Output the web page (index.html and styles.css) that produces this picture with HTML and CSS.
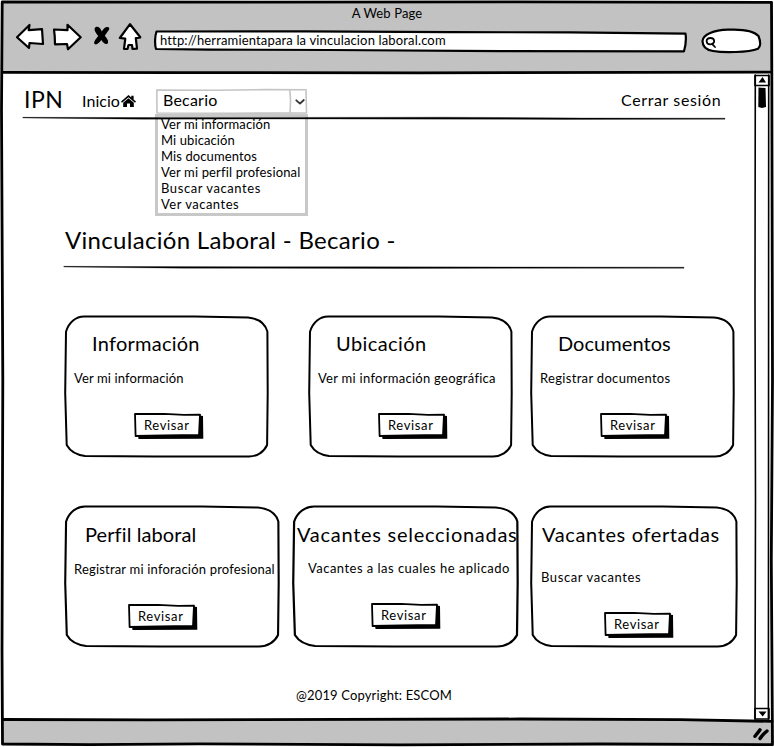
FILE: index.html
```
<!DOCTYPE html>
<html lang="es">
<head>
<meta charset="utf-8">
<title>A Web Page</title>
<link rel="stylesheet" href="styles.css">
</head>
<body>
<svg class="defs" width="0" height="0" aria-hidden="true">
  <symbol id="card-outline" viewBox="0 0 203 141" preserveAspectRatio="none">
    <path d="M1 15.7C4 6 11 .7 19 .6L90 .4L130 .5L183 1.5C193 2.5 200 7 202.4 15.5L202.7 77L202.1 129C199 136 192 140.4 184 140.5L90 140.6L20 139.9C12 139 5 135 1.7 129L.2 77Z"/>
  </symbol>
  <symbol id="button-outline" viewBox="0 0 70 27">
    <path class="solid" d="M4 22L65 21L65.5 2.5L69 3L69.3 25.7L4.5 26Z"/>
    <path class="face" d="M1 1L30 .8L50 1.8L66 1.6L65 22L30 22.3L1.6 23Z"/>
  </symbol>
</svg>
<div class="window">
  <header class="chrome">
    <div class="window-title">A Web Page</div>
    <div class="toolbar">
      <svg class="back" viewBox="16 23 28 30"><path d="M17 37.2L29.5 25L28.7 30.2L42 29.2L43 44L29.5 43L29 48Z"/></svg>
      <svg class="forward" viewBox="52 23 30 30"><path d="M54 29.5L67.5 30.2L67.5 24.8L80.7 37.3L68 49.3L67 44L55 44.3L54.7 36Z"/></svg>
      <svg class="stop" viewBox="92 23 19 30"><path d="M95.5 27.2C98 26 100.5 28 101.8 31.5C103.5 28.5 105.5 26.5 108 27C110.5 28 109 30 107 32.5L104.8 35.8C107 38.5 109 41 107.8 43.2C106 45.5 103 42.5 101.3 40C99 43 96.5 45.5 94.6 44C93 42 96 39 98.3 36C96 33 93 29 95.5 27.2Z"/></svg>
      <svg class="home" viewBox="118 23 24 30"><path d="M130 24.2L140.3 37.3L135.8 38.2L137 48.7L132.5 48.8L132 45L128.5 45L127.5 49L124 48.8L125.3 38.6L119.8 38Z"/></svg>
      <div class="address">
        <svg class="sketch" viewBox="154 23 534 30"><path d="M156.5 31.5L305 31.3L450 32.2L570 32.3L685.5 33.7C686.5 40 685.5 46 684 51.3L500 51.2L330 50L210 49.6L156 49C154.5 44 155 36 156.5 31.5Z"/></svg>
        <span>http://herramientapara la vinculacion laboral.com</span>
      </div>
      <svg class="search" viewBox="700 23 63 30"><path d="M702.5 41C703 34 714 30.2 728 29.7C742 29 754 31 758.5 36C760.5 41 761 46 758 48.7C748 52.5 724 53 713 51C706 50 702.5 46 702.5 41Z"/><path class="lens" d="M710.5 38C704.8 38 705.8 44.5 710.5 44.3C715.8 44 715 38 710.5 38M712 43.8L715 47"/></svg>
    </div>
  </header>
  <div class="viewport">
    <main class="page">
      <nav class="navbar">
        <span class="brand">IPN</span>
        <a class="nav-home">Inicio<svg viewBox="0 0 15 12"><path d="M7.5 0L10.3 2.4V.7H12.6V4.4L15 6.6L14 7.8L7.5 2.3L1 7.8L0 6.6Z"/><path d="M7.5 3.2L12.8 7.8V12H9V8.5H6V12H2.2V7.8Z"/></svg></a>
        <div class="select">
          <svg class="sketch" viewBox="0 0 151 25"><path d="M.8 1L60 1.2L110 .6L150 .8L150.5 24L80 24.2L1 24ZM133.8 1L134.6 12L134 24"/><path class="chevron" d="M140.3 11.3L144 14.6L147.8 11"/></svg>
          <span>Becario</span>
          <ul class="menu">
            <li>Ver mi información</li>
            <li>Mi ubicación</li>
            <li>Mis documentos</li>
            <li>Ver mi perfil profesional</li>
            <li>Buscar vacantes</li>
            <li>Ver vacantes</li>
          </ul>
        </div>
        <a class="logout">Cerrar sesión</a>
        <svg class="rule nav-rule" viewBox="0 0 702 4"><path d="M0 .3L140 .6L420 .2L560 1L702 1.2V2.2L540 2.4L300 2L120 2.2L0 .9Z"/></svg>
      </nav>
      <h1>Vinculación Laboral - Becario -</h1>
      <svg class="rule title-rule" viewBox="0 0 620 4"><path d="M0 .3L90 .6L300 .8L620 1.2V2.2L340 2.4L120 2.2L0 1Z"/></svg>
      <section class="row row-top">
        <article class="card info">
          <svg class="sketch"><use href="#card-outline"/></svg>
          <h2>Información</h2>
          <p>Ver mi información</p>
          <button><svg class="sketch"><use href="#button-outline"/></svg><span>Revisar</span></button>
        </article>
        <article class="card location">
          <svg class="sketch"><use href="#card-outline"/></svg>
          <h2>Ubicación</h2>
          <p>Ver mi información geográfica</p>
          <button><svg class="sketch"><use href="#button-outline"/></svg><span>Revisar</span></button>
        </article>
        <article class="card documents">
          <svg class="sketch"><use href="#card-outline"/></svg>
          <h2>Documentos</h2>
          <p>Registrar documentos</p>
          <button><svg class="sketch"><use href="#button-outline"/></svg><span>Revisar</span></button>
        </article>
      </section>
      <section class="row row-bottom">
        <article class="card profile">
          <svg class="sketch"><use href="#card-outline"/></svg>
          <h2>Perfil laboral</h2>
          <p>Registrar mi inforación profesional</p>
          <button><svg class="sketch"><use href="#button-outline"/></svg><span>Revisar</span></button>
        </article>
        <article class="card selected">
          <svg class="sketch"><use href="#card-outline"/></svg>
          <h2>Vacantes seleccionadas</h2>
          <p>Vacantes a las cuales he aplicado</p>
          <button><svg class="sketch"><use href="#button-outline"/></svg><span>Revisar</span></button>
        </article>
        <article class="card offered">
          <svg class="sketch"><use href="#card-outline"/></svg>
          <h2>Vacantes ofertadas</h2>
          <p>Buscar vacantes</p>
          <button><svg class="sketch"><use href="#button-outline"/></svg><span>Revisar</span></button>
        </article>
      </section>
      <footer>@2019 Copyright: ESCOM</footer>
    </main>
    <div class="scrollbar">
      <svg viewBox="753 73 21 647">
        <path d="M755.3 75L755 300L755.5 500L755 719M768.7 75L768.4 719"/>
        <path d="M755 75.5H769V85.5H755ZM755 708.5H769V719H755Z"/>
        <path class="solid" d="M762.5 77L766 82.5H758.5ZM758.5 711.5H766.5L762.7 716.5Z"/>
        <path class="solid" d="M758.5 87.5L765.5 88L766 107L762 108L758.3 107Z"/>
      </svg>
    </div>
  </div>
  <div class="status">
    <svg viewBox="752 727 18 15"><path d="M755 736.3C757 733.5 758.5 732 760 729.8M760 738.5C762 735.5 764.5 733 767 731"/></svg>
  </div>
  <svg class="frame" viewBox="0 0 774 747">
    <path d="M2.2 2L260 2.2L520 1.8L771.5 2.3L771.8 73L772.5 380L771.3 560L772.5 744.7L600 744L400 744.8L200 743.8L90 744.7L2.5 744L2 650L2.8 380L1.5 110Z"/>
    <path d="M2.5 72.3L180 72.6L420 72.9L770 72.2M2.5 719.5L150 719.8L520 719L680 719.6L772 721.4"/>
  </svg>
</div>
</body>
</html>
```
FILE: styles.css
```
* { box-sizing: border-box; }

body {
  margin: 0;
  background: #fff;
  color: #000;
  font: 13px/16px Lato, "Open Sans", sans-serif;
}

h1, h2, p, ul { margin: 0; padding: 0; font-weight: 400; }

svg { display: block; fill: none; stroke: #000; stroke-width: 2; stroke-linejoin: round; stroke-linecap: round; overflow: visible; }
symbol { overflow: visible; }
.defs { position: absolute; }
.solid { fill: #000; stroke: none; }
.face { fill: #fff; stroke-width: 1.8; }

/* Hand-drawn outlines lie behind the content of their box */
.sketch { position: absolute; inset: 0; width: 100%; height: 100%; z-index: -1; }

.window {
  position: relative;
  display: flex;
  flex-direction: column;
  width: 774px;
  height: 747px;
  overflow: hidden;
}
.frame { position: absolute; inset: 0; width: 774px; height: 747px; stroke-width: 2.8; pointer-events: none; }

.chrome { height: 71px; margin: 2px 2px 0; background: #c2c2c2; }
.window-title { height: 21px; padding-top: 3px; line-height: 17px; text-align: center; letter-spacing: .11px; }
.toolbar { display: flex; height: 30px; padding-left: 14px; }
.toolbar svg { height: 30px; fill: #fff; flex: none; stroke-width: 2.2; }
.back { width: 28px; }
.forward { width: 30px; margin-left: 8px; }
.stop { width: 19px; margin-left: 10px; }
.toolbar .stop { stroke: none; fill: #000; }
.home { width: 24px; margin-left: 7px; }
.address {
  position: relative;
  z-index: 0;
  width: 534px;
  margin-left: 12px;
  padding-left: 6px;
  line-height: 35px;
  letter-spacing: .15px;
}
.search { width: 63px; margin-left: 12px; }
.lens { fill: none; stroke-width: 1.8; }

.viewport { display: flex; height: 647px; }
.page { width: 753px; padding-top: 16px; }
.scrollbar { width: 21px; }
.scrollbar svg { width: 21px; height: 647px; stroke-width: 1.6; }

.navbar { position: relative; display: flex; height: 30px; padding-left: 24px; font-size: 16px; }
.brand { width: 58px; font-size: 23px; line-height: 20px; letter-spacing: .5px; }
.nav-home { display: flex; width: 74px; line-height: 24px; letter-spacing: .05px; }
.nav-home svg { width: 15px; height: 12px; margin: 6px 0 0 1px; fill: #000; stroke: none; }
.select { position: relative; z-index: 0; width: 151px; height: 25px; padding-left: 7px; line-height: 21px; letter-spacing: .21px; }
.select > .sketch { stroke: #c4c4c4; stroke-width: 1.6; }
.select .chevron { stroke: #333; stroke-width: 1.8; }
.logout { margin-left: 314px; line-height: 21px; letter-spacing: .62px; white-space: nowrap; }

.menu {
  position: absolute;
  top: 25px;
  left: -1px;
  width: 153px;
  height: 102px;
  padding: 0 0 0 3px;
  border: 3px solid #c8c8c8;
  background: #fff;
  font-size: 13px;
  line-height: 16px;
  list-style: none;
  white-space: nowrap;
  letter-spacing: .1px;
}
.menu li:first-child { margin-top: -1px; }
.menu li:nth-child(4) { letter-spacing: .15px; }
.menu li:nth-child(5) { letter-spacing: .58px; }
.menu li:nth-child(6) { letter-spacing: .5px; }

.rule { height: 4px; fill: #000; stroke: #000; stroke-width: .3; }
.nav-rule { position: absolute; left: 23px; top: 28px; width: 702px; }

h1 { margin: 106px 0 0 65px; font-size: 24px; line-height: 30px; letter-spacing: .3px; }
.title-rule { width: 620px; margin: 11px 0 0 64px; }

.row { display: flex; padding-left: 66px; }
.row-top { margin-top: 46px; }
.row-bottom { margin-top: 49px; }
.card { position: relative; z-index: 0; width: 203px; height: 141px; padding-top: 15px; white-space: nowrap; }
.card h2 { padding-left: 27px; font-size: 20px; line-height: 24px; }
.card p { margin-top: 15px; padding-left: 9px; }
button {
  position: relative;
  z-index: 0;
  display: block;
  width: 70px;
  height: 27px;
  margin: 27px 0 0 69px;
  padding: 0 0 3px 10px;
  border: 0;
  background: none;
  color: #000;
  font: inherit;
  letter-spacing: .63px;
  line-height: 24px;
  text-align: left;
}

.info { margin-left: -1px; }
.info h2 { letter-spacing: .25px; }
.info p { letter-spacing: .12px; }
.location { margin-left: 41px; }
.location h2 { letter-spacing: .42px; }
.location p { letter-spacing: .28px; }
.documents { margin-left: 19px; }
.documents h2 { letter-spacing: .05px; }
.documents p { letter-spacing: .32px; }

.row-bottom .card { padding-top: 16px; }
.row-bottom .profile { width: 214px; margin-left: -1px; }
.profile h2 { padding-left: 20px; letter-spacing: .1px; }
.profile p { letter-spacing: .19px; }
.profile button { margin-left: 63px; }
.row-bottom .selected { width: 225px; margin-left: 14px; }
.selected h2 { padding-left: 4px; letter-spacing: .73px; }
.selected p { margin-top: 14px; padding-left: 15px; letter-spacing: .47px; }
.selected button { margin-left: 78px; }
.row-bottom .offered { width: 206px; margin-left: 13px; }
.offered h2 { padding-left: 11px; letter-spacing: .63px; }
.offered p { margin-top: 23px; padding-left: 10px; letter-spacing: .6px; }
.offered button { margin-left: 73px; }

footer { margin: 40px 0 0 296px; letter-spacing: .15px; }

.status { display: flex; justify-content: flex-end; height: 25px; margin: 0 2px; padding: 7px 2px 0 0; background: #c2c2c2; }
.status svg { width: 18px; height: 15px; stroke-width: 3.4; }
```
